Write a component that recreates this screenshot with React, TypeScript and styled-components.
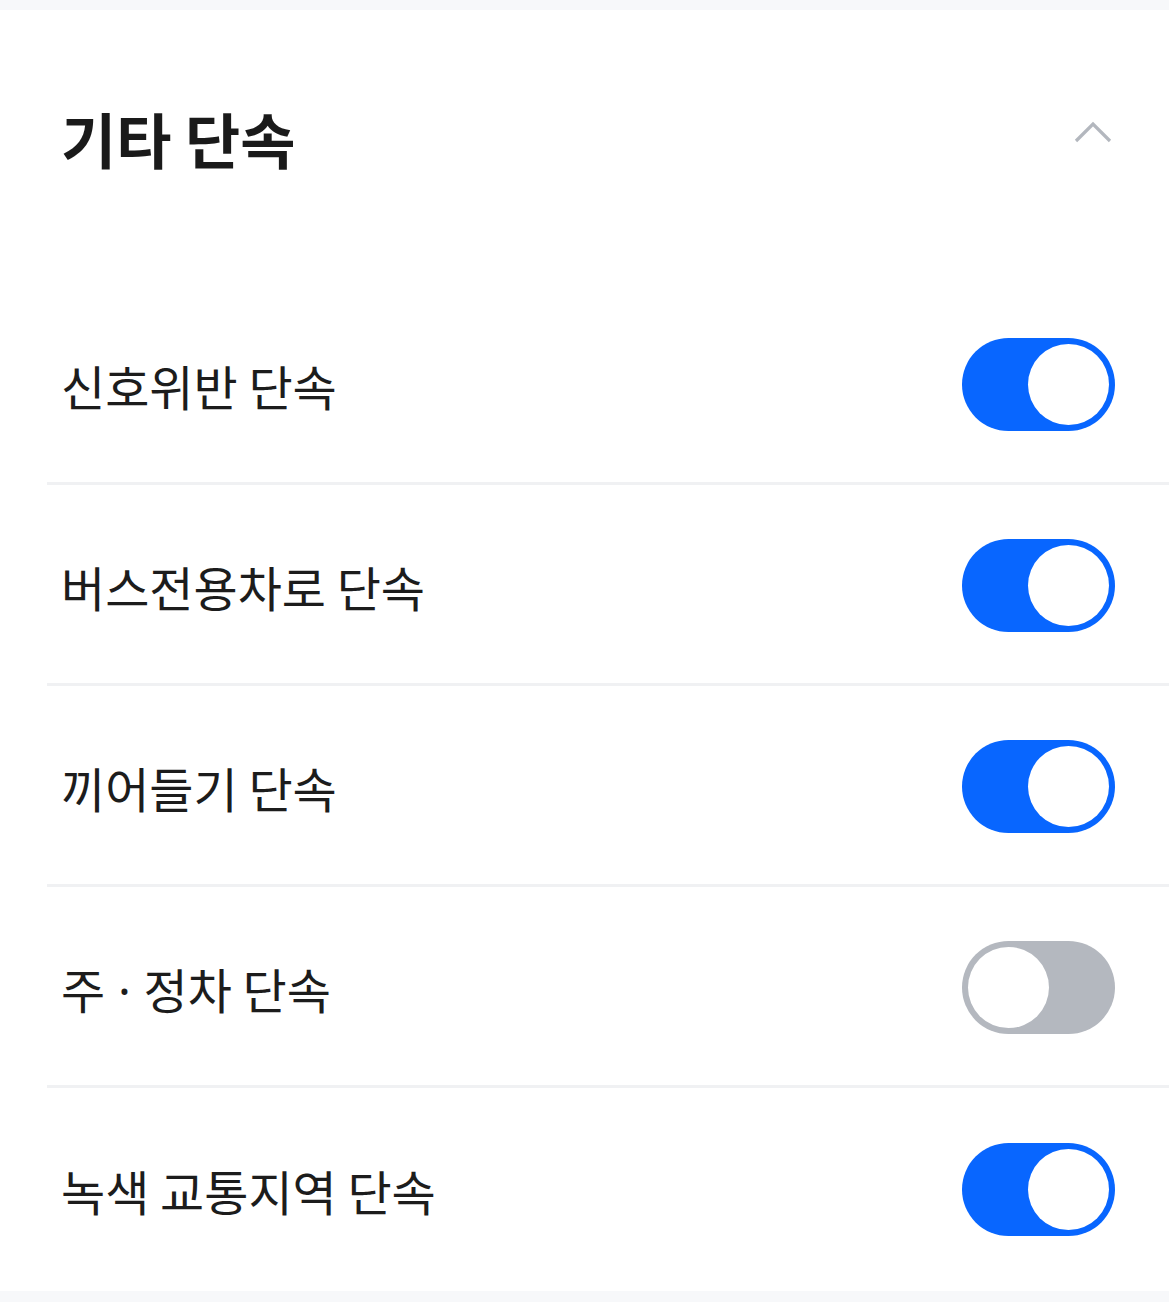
import React, { useState } from "react";
import styled, { createGlobalStyle } from "styled-components";

const GlobalStyle = createGlobalStyle`
  html, body { margin: 0; padding: 0; background: #f7f8fa; }
  body { font-family: "Noto Sans CJK KR", "Noto Sans", sans-serif; }
  * { box-sizing: border-box; }
`;

const Page = styled.div`
  width: 1169px;
  height: 1302px;
  background: #f7f8fa;
  padding-top: 10px;
`;

const Panel = styled.section`
  background: #ffffff;
  height: 1281px;
  display: flex;
  flex-direction: column;
`;

const Header = styled.div`
  height: 256px;
  display: flex;
  align-items: center;
  justify-content: space-between;
  padding: 0 56px 0 61px;
`;

const Title = styled.h2`
  margin: 0;
  font-size: 60px;
  font-weight: 700;
  color: #1a1a1a;
`;

const ChevronButton = styled.button`
  border: none;
  background: none;
  padding: 0;
  width: 40px;
  height: 30px;
  margin-bottom: 10px;
  display: flex;
  align-items: center;
  justify-content: center;
  cursor: pointer;
`;

const List = styled.ul`
  list-style: none;
  margin: 20px 0 0 47px;
  padding: 0;
`;

const Row = styled.li<{ $last?: boolean }>`
  height: ${(p) => (p.$last ? "203px" : "201px")};
  display: flex;
  align-items: center;
  justify-content: space-between;
  padding: ${(p) => (p.$last ? "0" : "3px")} 54px 0 14px;
  border-bottom: ${(p) => (p.$last ? "none" : "3px solid #f0f1f3")};
`;

const Label = styled.span`
  font-size: 48px;
  font-weight: 400;
  color: #1c1c1c;
`;

const Dot = styled.span`
  font-family: "Noto Sans", sans-serif;
  margin: 0 2px;
`;

const Track = styled.button<{ $on: boolean }>`
  position: relative;
  width: 153px;
  height: 93px;
  border-radius: 47px;
  border: none;
  padding: 0;
  cursor: pointer;
  background: ${(p) => (p.$on ? "#0866ff" : "#b4b8bf")};
`;

const Knob = styled.span<{ $on: boolean }>`
  position: absolute;
  top: 6px;
  left: ${(p) => (p.$on ? "66px" : "6px")};
  width: 81px;
  height: 81px;
  border-radius: 50%;
  background: #ffffff;
`;

const items: { label: React.ReactNode; key: string; on: boolean }[] = [
  { key: "signal", label: "신호위반 단속", on: true },
  { key: "bus", label: "버스전용차로 단속", on: true },
  { key: "cut", label: "끼어들기 단속", on: true },
  {
    key: "park",
    label: (
      <>
        주 <Dot>·</Dot> 정차 단속
      </>
    ),
    on: false,
  },
  { key: "green", label: "녹색 교통지역 단속", on: true },
];

export default function App() {
  const [state, setState] = useState(items.map((i) => i.on));
  return (
    <>
      <GlobalStyle />
      <Page>
        <Panel>
          <Header>
            <Title>기타 단속</Title>
            <ChevronButton aria-label="접기">
              <svg width="38" height="22" viewBox="0 0 38 22">
                <path d="M2 20 L19 3 L36 20" fill="none" stroke="#b3b7be" strokeWidth="3.2" />
              </svg>
            </ChevronButton>
          </Header>
          <List>
            {items.map((it, i) => (
              <Row key={it.key} $last={i === items.length - 1}>
                <Label>{it.label}</Label>
                <Track
                  $on={state[i]}
                  aria-pressed={state[i]}
                  onClick={() => setState((s) => s.map((v, j) => (j === i ? !v : v)))}
                >
                  <Knob $on={state[i]} />
                </Track>
              </Row>
            ))}
          </List>
        </Panel>
      </Page>
    </>
  );
}
